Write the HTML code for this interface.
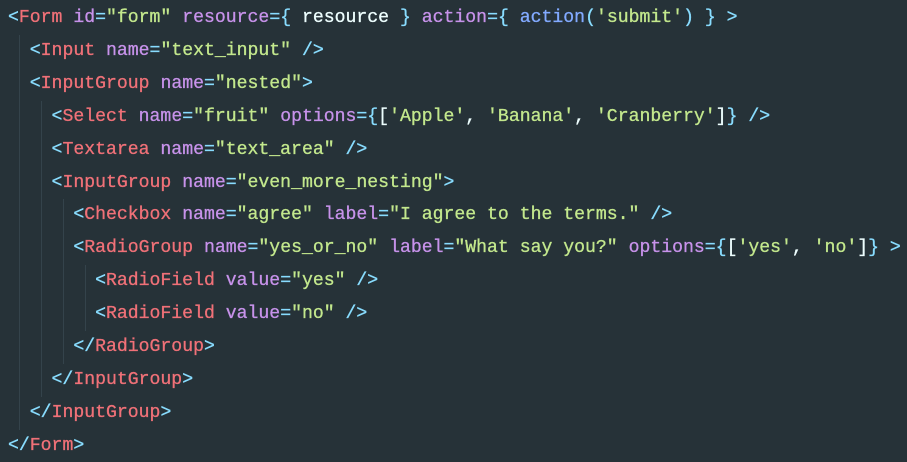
<!DOCTYPE html>
<html><head><meta charset="utf-8"><style>
html,body{margin:0;padding:0;background:#263238;width:907px;height:462px;overflow:hidden}
pre{margin:0;padding:2px 0 0 8px;font-family:"Liberation Mono",monospace;font-size:18.15px;line-height:32.9px;color:#eeffff;position:relative;z-index:1;-webkit-text-stroke:0.3px}
.t{color:#f07178}.a{color:#c792ea}.s{color:#c3e88d}.p{color:#89ddff}.f{color:#82aaff}
.g{position:absolute;width:1px;background:#34434b}
</style></head><body>
<div class="g" style="left:19px;top:35px;height:395px"></div>
<div class="g" style="left:41px;top:101px;height:296px"></div>
<div class="g" style="left:63px;top:199px;height:165px"></div>
<div class="g" style="left:85px;top:265px;height:66px"></div>
<pre><span class="p">&lt;</span><span class="t">Form</span> <span class="a">id</span><span class="p">=</span><span class="s">"form"</span> <span class="a">resource</span><span class="p">={</span> resource <span class="p">}</span> <span class="a">action</span><span class="p">={</span> <span class="f">action</span><span class="p">(</span><span class="s">'submit'</span><span class="p">)</span> <span class="p">}</span> <span class="p">&gt;</span>
  <span class="p">&lt;</span><span class="t">Input</span> <span class="a">name</span><span class="p">=</span><span class="s">"text_input"</span> <span class="p">/&gt;</span>
  <span class="p">&lt;</span><span class="t">InputGroup</span> <span class="a">name</span><span class="p">=</span><span class="s">"nested"</span><span class="p">&gt;</span>
    <span class="p">&lt;</span><span class="t">Select</span> <span class="a">name</span><span class="p">=</span><span class="s">"fruit"</span> <span class="a">options</span><span class="p">={</span>[<span class="s">'Apple'</span>, <span class="s">'Banana'</span>, <span class="s">'Cranberry'</span>]<span class="p">}</span> <span class="p">/&gt;</span>
    <span class="p">&lt;</span><span class="t">Textarea</span> <span class="a">name</span><span class="p">=</span><span class="s">"text_area"</span> <span class="p">/&gt;</span>
    <span class="p">&lt;</span><span class="t">InputGroup</span> <span class="a">name</span><span class="p">=</span><span class="s">"even_more_nesting"</span><span class="p">&gt;</span>
      <span class="p">&lt;</span><span class="t">Checkbox</span> <span class="a">name</span><span class="p">=</span><span class="s">"agree"</span> <span class="a">label</span><span class="p">=</span><span class="s">"I agree to the terms."</span> <span class="p">/&gt;</span>
      <span class="p">&lt;</span><span class="t">RadioGroup</span> <span class="a">name</span><span class="p">=</span><span class="s">"yes_or_no"</span> <span class="a">label</span><span class="p">=</span><span class="s">"What say you?"</span> <span class="a">options</span><span class="p">={</span>[<span class="s">'yes'</span>, <span class="s">'no'</span>]<span class="p">}</span> <span class="p">&gt;</span>
        <span class="p">&lt;</span><span class="t">RadioField</span> <span class="a">value</span><span class="p">=</span><span class="s">"yes"</span> <span class="p">/&gt;</span>
        <span class="p">&lt;</span><span class="t">RadioField</span> <span class="a">value</span><span class="p">=</span><span class="s">"no"</span> <span class="p">/&gt;</span>
      <span class="p">&lt;/</span><span class="t">RadioGroup</span><span class="p">&gt;</span>
    <span class="p">&lt;/</span><span class="t">InputGroup</span><span class="p">&gt;</span>
  <span class="p">&lt;/</span><span class="t">InputGroup</span><span class="p">&gt;</span>
<span class="p">&lt;/</span><span class="t">Form</span><span class="p">&gt;</span></pre>
</body></html>
